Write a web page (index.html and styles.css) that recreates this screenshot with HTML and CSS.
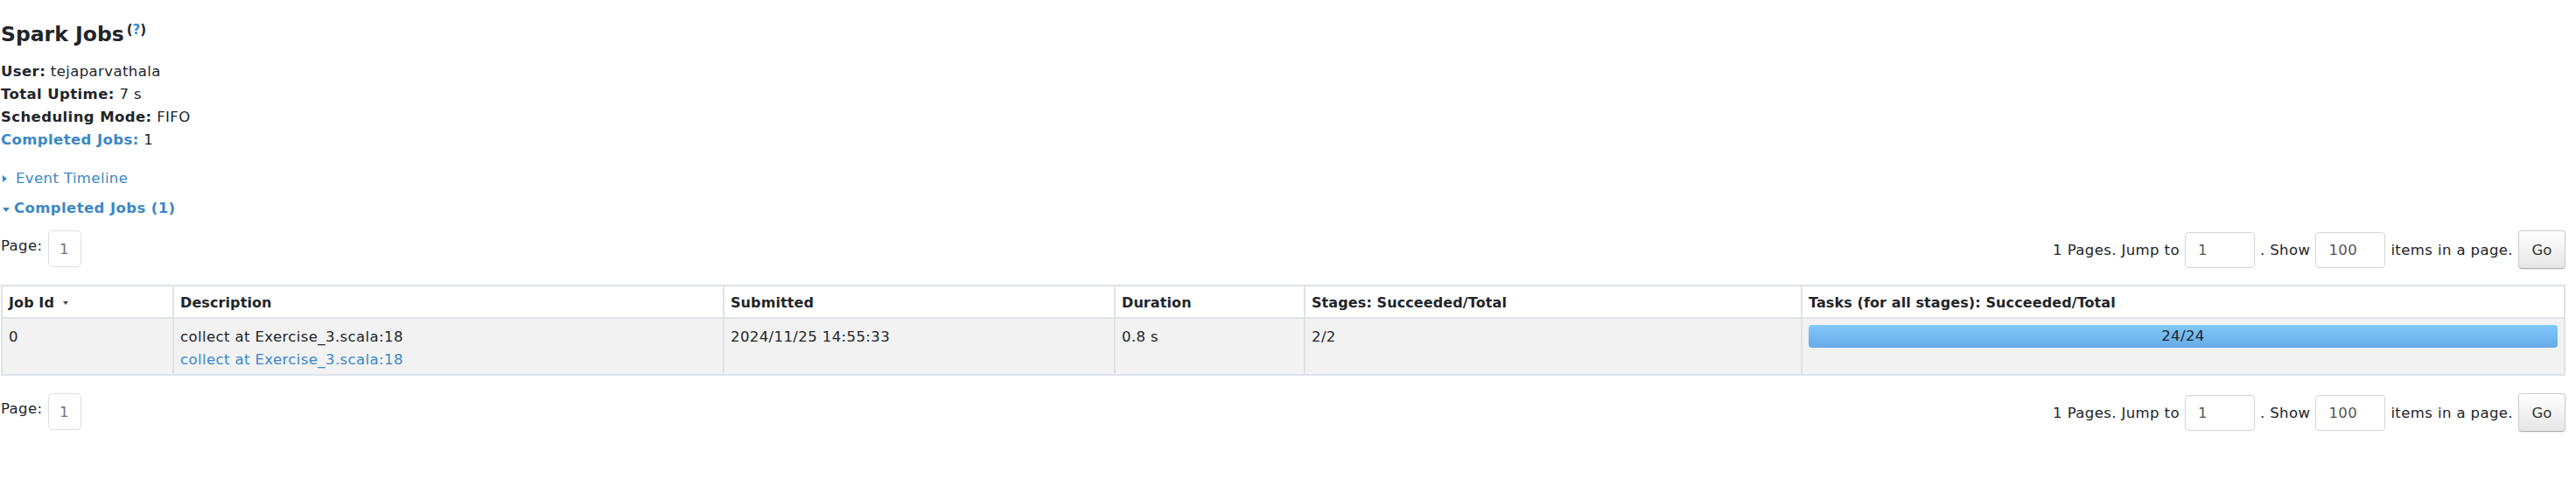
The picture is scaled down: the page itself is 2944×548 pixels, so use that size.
FILE: index.html
```html
<!DOCTYPE html>
<html lang="en">
<head>
<meta charset="utf-8">
<title>Spark Jobs</title>
<link rel="stylesheet" href="styles.css">
</head>
<body>
<div class="page">
  <h3 class="title">Spark Jobs<sup class="help">(<a class="help-link">?</a>)</sup></h3>
  <ul class="summary">
    <li><strong>User:</strong> tejaparvathala</li>
    <li><strong>Total Uptime:</strong> 7 s</li>
    <li><strong>Scheduling Mode:</strong> FIFO</li>
    <li><a class="link"><strong>Completed Jobs:</strong></a> 1</li>
  </ul>
  <div class="toggle timeline"><span class="arrow-right"></span><a class="link">Event Timeline</a></div>
  <div class="toggle completed"><span class="arrow-down"></span><a class="link"><strong>Completed Jobs (1)</strong></a></div>

  <div class="pager pager-top">
    <div class="pager-left"><span class="page-label">Page:</span><span class="page-box">1</span></div>
    <div class="pager-right">
      <span>1 Pages. Jump to</span>
      <span class="field">1</span>
      <span>. Show</span>
      <span class="field">100</span>
      <span>items in a page.</span>
      <button class="go">Go</button>
    </div>
  </div>

  <table class="jobs">
    <colgroup>
      <col class="c-id"><col class="c-desc"><col class="c-sub"><col class="c-dur"><col class="c-stage"><col class="c-task">
    </colgroup>
    <thead>
      <tr>
        <th>Job Id <span class="sort"></span></th>
        <th>Description</th>
        <th>Submitted</th>
        <th>Duration</th>
        <th>Stages: Succeeded/Total</th>
        <th>Tasks (for all stages): Succeeded/Total</th>
      </tr>
    </thead>
    <tbody>
      <tr>
        <td>0</td>
        <td>collect at Exercise_3.scala:18<br><a class="link">collect at Exercise_3.scala:18</a></td>
        <td>2024/11/25 14:55:33</td>
        <td>0.8 s</td>
        <td>2/2</td>
        <td><div class="progress">24/24</div></td>
      </tr>
    </tbody>
  </table>

  <div class="pager pager-bottom">
    <div class="pager-left"><span class="page-label">Page:</span><span class="page-box">1</span></div>
    <div class="pager-right">
      <span>1 Pages. Jump to</span>
      <span class="field">1</span>
      <span>. Show</span>
      <span class="field">100</span>
      <span>items in a page.</span>
      <button class="go">Go</button>
    </div>
  </div>
</div>
</body>
</html>
```

FILE: styles.css
```css
* { box-sizing: border-box; }

body {
  margin: 0;
  background: #ffffff;
  color: #212529;
  font-family: "DejaVu Sans", "Liberation Sans", sans-serif;
  font-size: 16.5px;
  letter-spacing: 0.4px;
}

.page {
  padding: 24px 12px 40px 1px;
}

.link, .help-link {
  color: #3a87c8;
  text-decoration: none;
}

.title {
  margin: 0 0 15px;
  font-size: 23.5px;
  line-height: 30px;
  font-weight: bold;
  letter-spacing: 0;
}

.help {
  font-size: 15px;
  line-height: 0;
  vertical-align: 8px;
  margin-left: 3px;
}

.summary {
  list-style: none;
  margin: 0;
  padding: 0;
  line-height: 26px;
}

.toggle {
  display: flex;
  align-items: center;
  line-height: 26px;
}

.timeline { margin-top: 18px; }
.completed { margin-top: 8px; }

.arrow-right {
  width: 0;
  height: 0;
  border-left: 5px solid #3a87c8;
  border-top: 4px solid transparent;
  border-bottom: 4px solid transparent;
  margin: 0 10px 0 2px;
}

.arrow-down {
  width: 0;
  height: 0;
  border-top: 5px solid #3a87c8;
  border-left: 4.5px solid transparent;
  border-right: 4.5px solid transparent;
  margin: 3px 5px 0 2px;
}

.pager {
  display: flex;
  justify-content: space-between;
  align-items: flex-start;
  height: 44px;
}

.pager-top { margin-top: 12px; }
.pager-bottom { margin-top: 20px; }

.pager-left {
  display: flex;
  align-items: flex-start;
}

.page-label {
  line-height: 26px;
  padding-top: 5px;
  margin-right: 6px;
}

.page-box {
  width: 38px;
  height: 42px;
  border: 1.5px solid #dde0e4;
  border-radius: 5px;
  display: flex;
  align-items: center;
  justify-content: center;
  color: #6c757d;
}

.pager-right {
  display: flex;
  align-items: center;
  height: 44px;
  gap: 6px;
}

.field {
  width: 80px;
  height: 41px;
  border: 1.5px solid #d3d6da;
  border-radius: 4px;
  padding-left: 14px;
  display: flex;
  align-items: center;
  color: #555555;
}

.go {
  width: 54px;
  height: 44px;
  border: 1px solid #cccccc;
  border-bottom-color: #b0b0b0;
  border-radius: 4px;
  background: linear-gradient(#ffffff, #e6e6e6);
  font: inherit;
  color: #333333;
  box-shadow: 0 1px 2px rgba(0, 0, 0, 0.08);
  padding: 0;
}

.jobs {
  width: 100%;
  margin-top: 18px;
  border-collapse: collapse;
  table-layout: fixed;
}

.c-id { width: 196px; }
.c-desc { width: 629px; }
.c-sub { width: 447px; }
.c-dur { width: 217px; }
.c-stage { width: 568px; }

.jobs th, .jobs td {
  border: 2px solid #dfe2e6;
  text-align: left;
  vertical-align: top;
}

.jobs th {
  padding: 9px 7px 6px;
  line-height: 20px;
  font-size: 16px;
  letter-spacing: 0.1px;
  font-weight: bold;
  background: #ffffff;
}

.jobs td {
  padding: 8px 7px 3px;
  line-height: 26px;
  background: #f2f2f2;
}

.sort {
  display: inline-block;
  width: 0;
  height: 0;
  border-top: 4px solid #444;
  border-left: 3px solid transparent;
  border-right: 3px solid transparent;
  margin-left: 4px;
  vertical-align: 3px;
}

.progress {
  margin-top: -1px;
  height: 26px;
  line-height: 26px;
  border-radius: 4px;
  background: linear-gradient(#80c8fa, #68abe7);
  text-align: center;
  color: #212529;
}
```
